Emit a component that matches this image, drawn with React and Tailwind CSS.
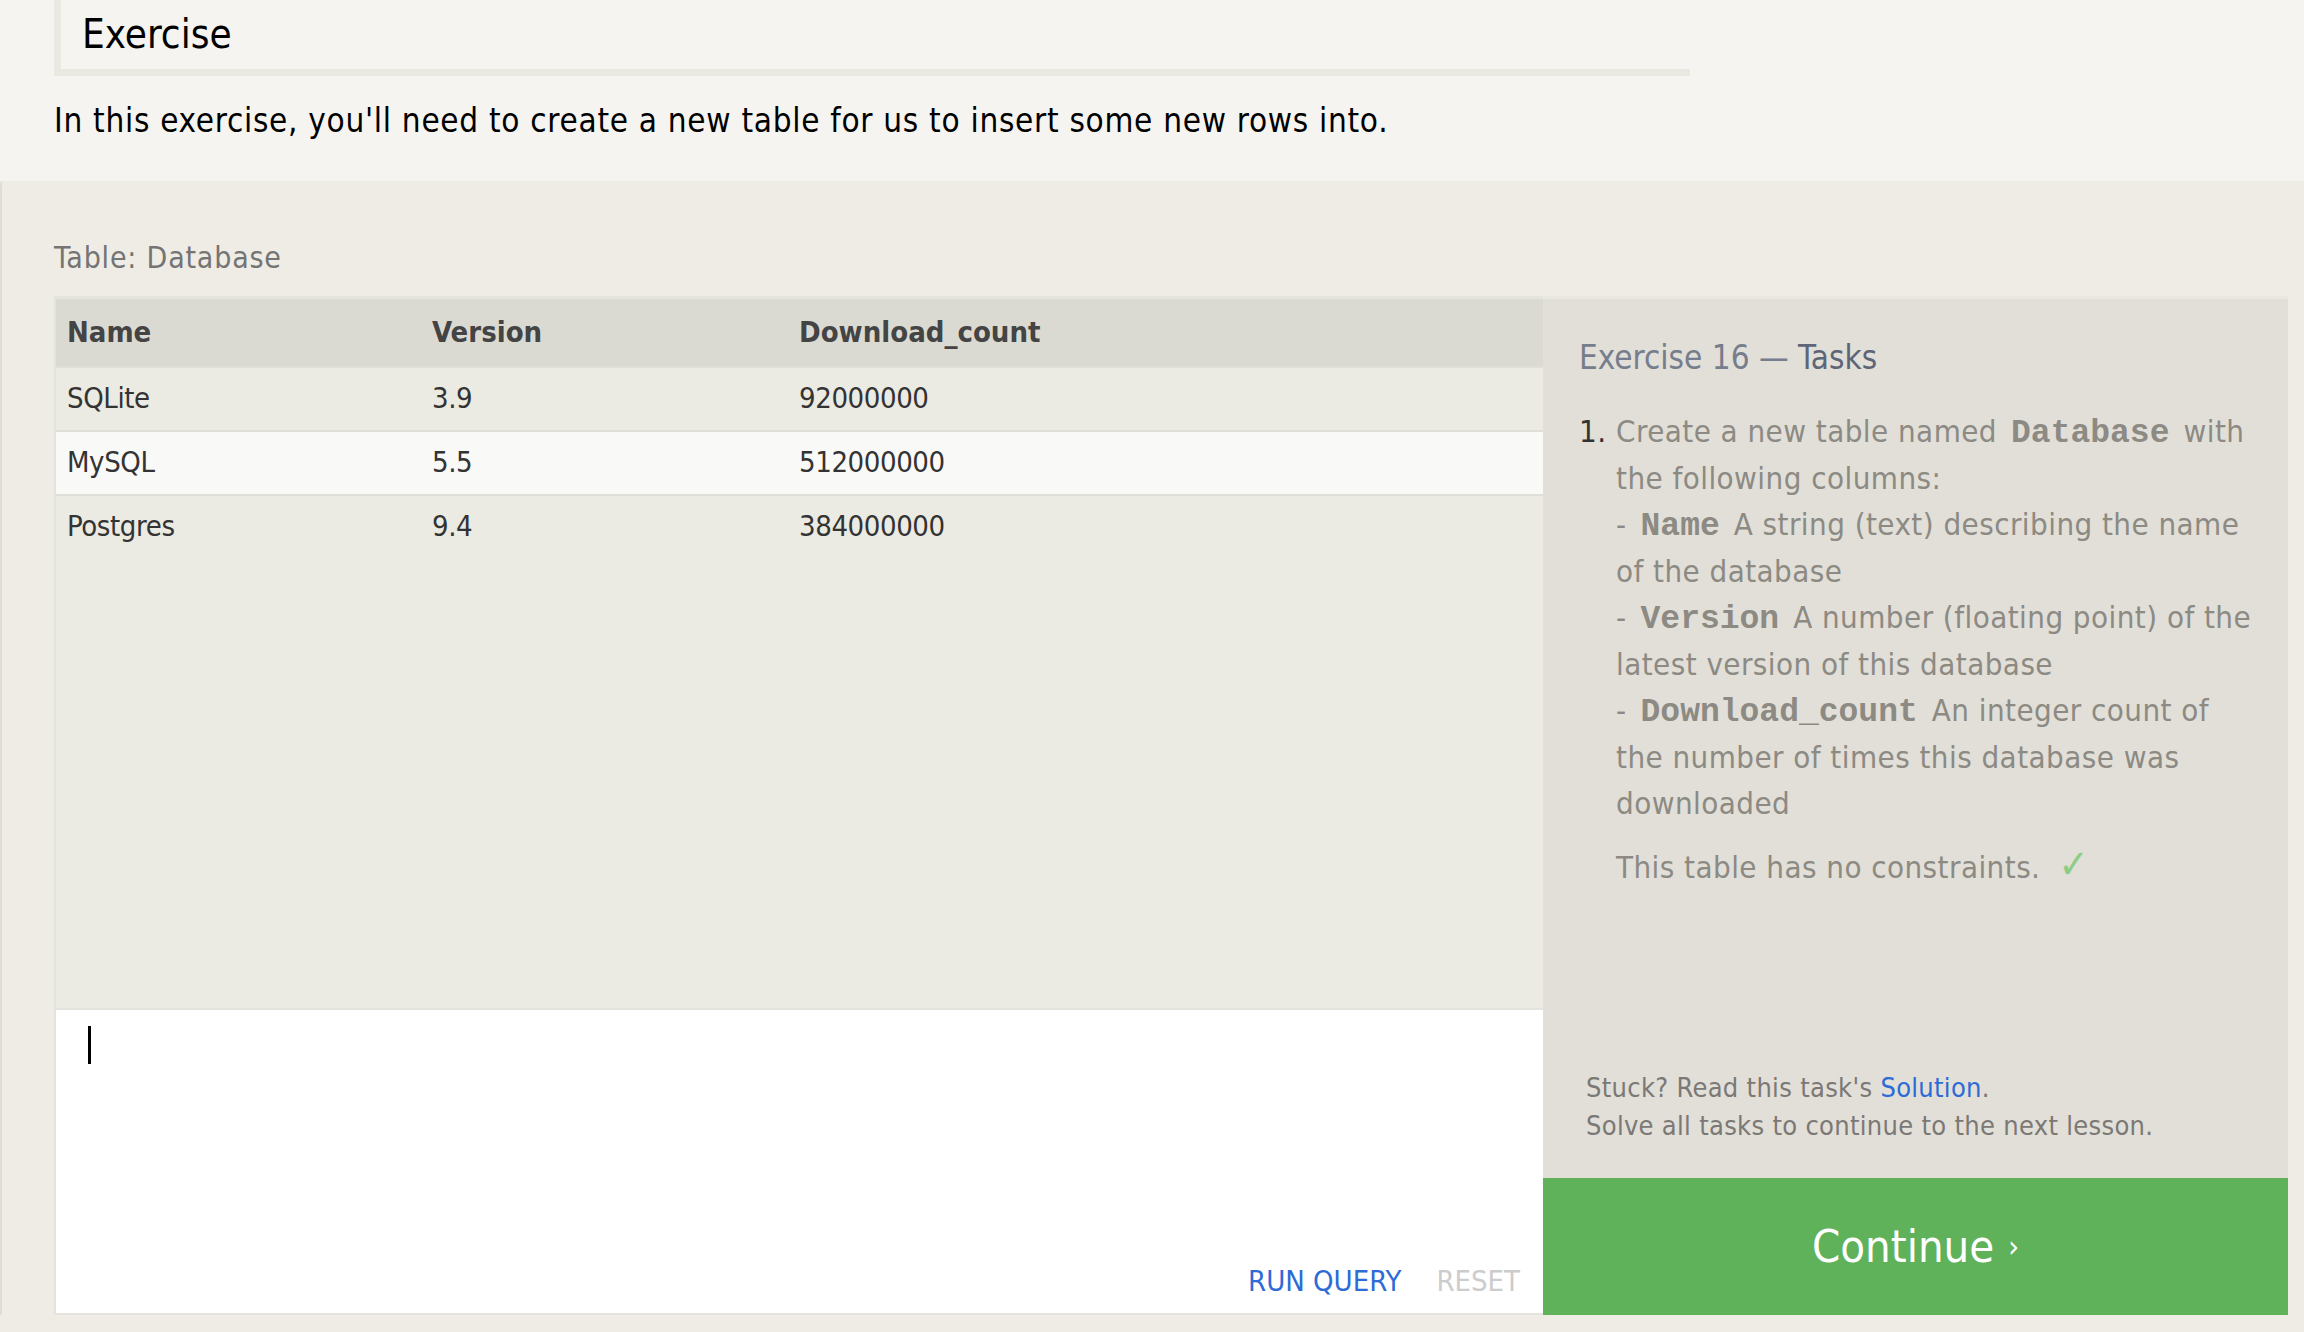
import React from "react";

const rows = [
  { name: "SQLite", version: "3.9", count: "92000000" },
  { name: "MySQL", version: "5.5", count: "512000000" },
  { name: "Postgres", version: "9.4", count: "384000000" },
];

function Code({ children }) {
  return (
    <code className="font-['Liberation_Mono',monospace] font-bold text-[33px] leading-none tracking-normal text-[#8c8a83] mx-[14px]">
      {children}
    </code>
  );
}

export default function App() {
  return (
    <div className="min-h-[1332px] bg-[#efece5] font-['DejaVu_Sans_Condensed','DejaVu_Sans',sans-serif] font-stretch-condensed">
      {/* lesson intro */}
      <div className="bg-[#f5f4f0] pl-[54px] pb-[36px]">
        <h2 className="w-[1636px] border-l-[7px] border-b-[7px] border-[#e9e8e1] pl-[21px] pt-[6px] pb-[7px] text-[40px] leading-[56px] text-black">
          Exercise
        </h2>
        <p className="mt-[21px] text-[33px] leading-[48px] tracking-[0.7px] text-black">
          In this exercise, you'll need to create a new table for us to insert some new rows into.
        </p>
      </div>

      {/* exercise widget */}
      <div className="border-l-2 border-[#e0ddd8] rounded-tl-[4px] pl-[52px] pr-[16px] pt-[57px]">
        <div className="text-[30px] leading-[40px] tracking-[0.8px] text-[#747474]">Table: Database</div>

        <div className="mt-[18px] flex">
          {/* table + editor */}
          <div className="w-[1489px] flex flex-col">
            <div className="h-[712px] bg-[#ebeae3] border-l-2 border-t-[3px] border-[#e4e3dd]">
              <div className="flex h-[67px] items-center bg-[#dbdad2] text-[29px] font-bold text-[#444]">
                <div className="w-[365px] pl-[11px]">Name</div>
                <div className="w-[367px] pl-[11px]">Version</div>
                <div className="pl-[11px]">Download_count</div>
              </div>
              {rows.map((r, i) => (
                <div
                  key={r.name}
                  className={
                    "flex h-[64px] items-center border-t-2 border-[#dfded8] text-[29px] tracking-[-0.4px] text-[#333] " +
                    (i === 1 ? "bg-[#f9f9f8]" : "bg-[#ebeae3]")
                  }
                >
                  <div className="w-[365px] pl-[11px]">{r.name}</div>
                  <div className="w-[367px] pl-[11px]">{r.version}</div>
                  <div className="pl-[11px]">{r.count}</div>
                </div>
              ))}
            </div>

            {/* query editor */}
            <div className="h-[307px] bg-white border-l-2 border-t-2 border-b-2 border-[#e4e3dd] flex flex-col pl-[32px] pr-[23px]">
              <div className="mt-[16px] w-[3px] h-[38px] bg-black" />
              <div className="mt-auto mb-[10px] flex justify-end gap-[35px] text-[29px] leading-[44px]">
                <span className="text-[#2d6bd6]">RUN QUERY</span>
                <span className="text-[#cccccc]">RESET</span>
              </div>
            </div>
          </div>

          {/* tasks panel */}
          <div className="w-[745px] flex flex-col bg-[#e1dfd8] border-t-[3px] border-[#e9e8e2]">
            <div className="pl-[36px] pr-[26px] pt-[37px]">
              <h3 className="text-[33px] leading-[44px] text-[#767d8c]">
                Exercise 16 — <span className="text-[#5e6577]">Tasks</span>
              </h3>
              <ol className="mt-[28px] text-[31px] leading-[46.5px] tracking-[0.45px] text-[#8c8a83]">
                <li className="flex">
                  <span className="w-[37px] shrink-0 text-[#333]">1.</span>
                  <div>
                    <div>
                      Create a new table named<Code>Database</Code>with the following columns:
                    </div>
                    <div>
                      -<Code>Name</Code>A string (text) describing the name of the database
                    </div>
                    <div>
                      -<Code>Version</Code>A number (floating point) of the latest version of this database
                    </div>
                    <div>
                      -<Code>Download_count</Code>An integer count of the number of times this database was
                      downloaded
                    </div>
                    <div className="mt-[17px]">
                      This table has no constraints.
                      <span className="ml-[18px] text-[40px] leading-none text-[#8ccd84]">✓</span>
                    </div>
                  </div>
                </li>
              </ol>
            </div>

            <div className="mt-auto pl-[43px] pb-[33px] text-[27px] leading-[38px] tracking-[0.3px] text-[#7b7875]">
              <div>
                Stuck? Read this task's <span className="text-[#2d6bd6]">Solution</span>.
              </div>
              <div>Solve all tasks to continue to the next lesson.</div>
            </div>

            <div className="h-[137px] bg-[#5fb25a] flex items-center justify-center text-white">
              <span className="text-[45px] leading-[56px]">Continue</span>
              <span className="ml-[14px] text-[30px]">›</span>
            </div>
          </div>
        </div>
      </div>
    </div>
  );
}
